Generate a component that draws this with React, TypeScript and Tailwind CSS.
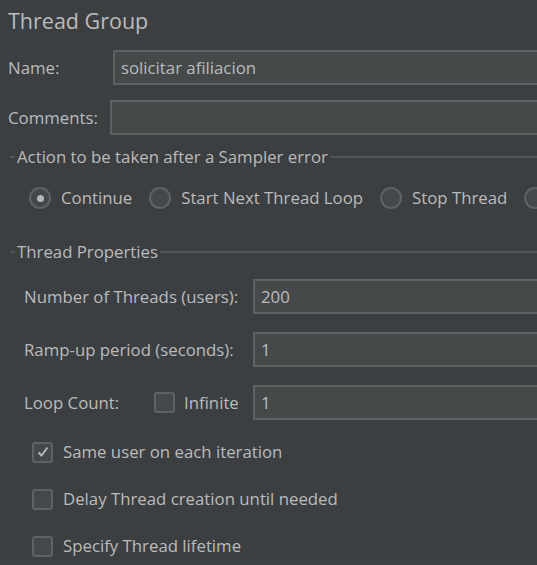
import React from "react";

const Radio = ({ checked, label }: { checked?: boolean; label: string }) => (
  <div className="flex items-center shrink-0 whitespace-nowrap">
    <div className="w-[22px] h-[22px] rounded-full border-2 border-[#5f6263] bg-[#43494a] flex items-center justify-center">
      {checked && <div className="w-[7px] h-[7px] rounded-full bg-[#b5b5b5]" />}
    </div>
    <span className="ml-[10px]">{label}</span>
  </div>
);

const Check = ({ checked }: { checked?: boolean }) => (
  <div className="w-[21px] h-[21px] rounded-[3px] border-2 border-[#5f6263] bg-[#43494a] flex items-center justify-center shrink-0">
    {checked && (
      <svg width="14" height="14" viewBox="0 0 14 14">
        <path d="M2.5 7.5 L5.5 10.5 L11.5 2.5" fill="none" stroke="#b8b8b8" strokeWidth="2" />
      </svg>
    )}
  </div>
);

const Field = ({ value }: { value?: string }) => (
  <div className="flex-1 h-[35px] bg-[#45494a] border-2 border-[#5e6161] flex items-center pl-[6px]">
    {value}
  </div>
);

const GroupTitle = ({ title }: { title: string }) => (
  <div className="flex items-center h-[22px]">
    <div className="w-[5px] h-[2px] bg-[#525556] ml-[10px]" />
    <span className="px-[2px] whitespace-nowrap">{title}</span>
    <div className="flex-1 h-[2px] bg-[#525556]" />
  </div>
);

export default function App() {
  return (
    <div
      className="w-[537px] h-[565px] overflow-hidden bg-[#3c3f41] text-[#bbbbbb] text-[16.8px] leading-[22px]"
      style={{ fontFamily: '"Open Sans", "Noto Sans", sans-serif' }}
    >
      <div className="w-[640px]">
        <div className="pl-[8px] pt-[6px] h-[50px] text-[21.5px] leading-[30px]">Thread Group</div>

        <div className="flex items-center">
          <span className="pl-[8px] w-[113px]">Name:</span>
          <Field value="solicitar afiliacion" />
        </div>
        <div className="flex items-center mt-[15px]">
          <span className="pl-[8px] w-[110px]">Comments:</span>
          <Field />
        </div>

        <div className="mt-[11px]">
          <GroupTitle title="Action to be taken after a Sampler error" />
          <div className="flex items-center gap-[17px] pl-[29px] mt-[19px]">
            <Radio checked label="Continue" />
            <Radio label="Start Next Thread Loop" />
            <Radio label="Stop Thread" />
            <Radio label="Stop Test" />
            <Radio label="Stop Test Now" />
          </div>
        </div>

        <div className="mt-[32px]">
          <GroupTitle title="Thread Properties" />
          <div className="pl-[24px] mt-[16px] flex flex-col gap-[18px]">
            <div className="flex items-center">
              <span className="w-[229px]">Number of Threads (users):</span>
              <Field value="200" />
            </div>
            <div className="flex items-center">
              <span className="w-[229px]">Ramp-up period (seconds):</span>
              <Field value="1" />
            </div>
            <div className="flex items-center">
              <span className="w-[130px]">Loop Count:</span>
              <Check />
              <span className="ml-[9px] w-[69px]">Infinite</span>
              <Field value="1" />
            </div>
          </div>
          <div className="pl-[32px] mt-[21px] flex flex-col gap-[25px]">
            <div className="flex items-center">
              <Check checked />
              <span className="ml-[10px]">Same user on each iteration</span>
            </div>
            <div className="flex items-center">
              <Check />
              <span className="ml-[10px]">Delay Thread creation until needed</span>
            </div>
            <div className="flex items-center">
              <Check />
              <span className="ml-[10px]">Specify Thread lifetime</span>
            </div>
          </div>
        </div>
      </div>
    </div>
  );
}
